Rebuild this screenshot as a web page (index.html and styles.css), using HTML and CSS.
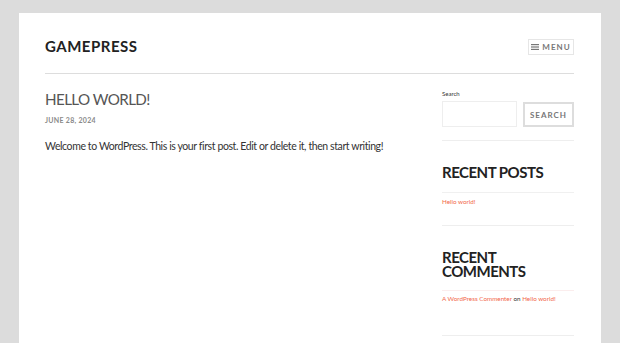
FILE: index.html
```html
<!DOCTYPE html>
<html lang="en">
<head>
    <meta charset="UTF-8">
    <meta name="viewport" content="width=device-width, initial-scale=1.0">
    <title>GamePress</title>
    <link rel="stylesheet" href="styles.css">
</head>
<body>
    <div class="page">
        <header class="site-header">
            <div class="site-title">GAMEPRESS</div>
            <button class="menu-toggle">
                <svg class="menu-icon" width="8" height="6" viewBox="0 0 8 6">
                    <rect x="0" y="0" width="8" height="1.2" fill="#777"></rect>
                    <rect x="0" y="2.4" width="8" height="1.2" fill="#777"></rect>
                    <rect x="0" y="4.8" width="8" height="1.2" fill="#777"></rect>
                </svg>
                MENU
            </button>
        </header>
        <div class="content">
            <main class="main">
                <article class="post">
                    <h2 class="post-title">HELLO WORLD!</h2>
                    <div class="post-date">JUNE 28, 2024</div>
                    <p class="post-body">Welcome to WordPress. This is your first post. Edit or delete it, then start writing!</p>
                </article>
            </main>
            <aside class="sidebar">
                <div class="widget-search">
                    <label class="search-label" for="s">Search</label>
                    <div class="search-form">
                        <input type="text" id="s" class="search-field">
                        <button class="search-submit">SEARCH</button>
                    </div>
                </div>
                <div class="widget">
                    <h3 class="widget-title">RECENT POSTS</h3>
                    <ul class="widget-list">
                        <li><a href="#">Hello world!</a></li>
                    </ul>
                </div>
                <div class="widget widget-comments">
                    <h3 class="widget-title">RECENT COMMENTS</h3>
                    <ul class="widget-list">
                        <li><a href="#">A WordPress Commenter</a> on <a href="#">Hello world!</a></li>
                    </ul>
                </div>
                <div class="widget"></div>
            </aside>
        </div>
    </div>
</body>
</html>
```

FILE: styles.css
```css
body {
    margin: 0;
    padding: 13px 19px 0;
    background-color: #DCDCDC;
    font-family: 'Lato', 'Liberation Sans', sans-serif;
    color: #333333;
}
.page {
    background-color: #FFFFFF;
    padding: 0 27px 0 26px;
    height: 330px;
    overflow: hidden;
}
.site-header {
    display: flex;
    justify-content: space-between;
    align-items: flex-start;
    padding: 25px 0 18px;
    border-bottom: 1px solid #DDDDDD;
}
.site-title {
    font-size: 15px;
    line-height: 16px;
    font-weight: 700;
    letter-spacing: 0.5px;
    color: #222222;
}
.menu-toggle {
    margin-top: 1px;
    width: 46px;
    height: 16px;
    padding: 0;
    background: #FFFFFF;
    border: 1px solid #E6E6E6;
    display: flex;
    align-items: center;
    justify-content: center;
    gap: 3px;
    font-family: inherit;
    font-size: 8px;
    font-weight: 700;
    letter-spacing: 1px;
    color: #777777;
}
.content {
    display: flex;
    justify-content: space-between;
}
.main {
    width: 370px;
    padding-top: 15px;
}
.post-title {
    margin: 0;
    font-size: 15.2px;
    line-height: 20px;
    font-weight: 400;
    letter-spacing: -0.6px;
    color: #555555;
}
.post-date {
    margin-top: 6px;
    font-size: 7px;
    line-height: 10px;
    font-weight: 700;
    letter-spacing: 0.3px;
    color: #8A8A8A;
}
.post-body {
    margin: 13px 0 0;
    font-size: 10.5px;
    line-height: 16px;
    letter-spacing: -0.4px;
    color: #333333;
}
.sidebar {
    width: 132px;
    padding-top: 16px;
}
.search-label {
    display: block;
    font-size: 6px;
    line-height: 8px;
    color: #333333;
}
.search-form {
    display: flex;
    justify-content: space-between;
    margin-top: 3px;
}
.search-field {
    box-sizing: border-box;
    width: 75px;
    height: 26px;
    margin: 0;
    border: 1px solid #EEEEEE;
    outline: none;
}
.search-submit {
    box-sizing: border-box;
    width: 51px;
    height: 25px;
    margin-top: 1px;
    padding: 0;
    background: #FFFFFF;
    border: 2px solid #DDDDDD;
    font-family: inherit;
    font-size: 8px;
    font-weight: 700;
    letter-spacing: 1px;
    color: #777777;
}
.widget-search {
    padding-bottom: 13px;
}
.widget {
    border-top: 1px solid #EEEEEE;
}
.widget-title {
    margin: 24px 0 0;
    padding-bottom: 13px;
    border-bottom: 1px solid #F0F0F0;
    font-size: 15px;
    line-height: 14px;
    font-weight: 700;
    letter-spacing: -0.5px;
    color: #222222;
}
.widget-list {
    list-style: none;
    margin: 4px 0 0;
    padding: 0 0 18px;
    font-size: 6.3px;
    line-height: 10px;
    color: #333333;
}
.widget-list a {
    color: #F2674A;
    text-decoration: none;
}
.widget-comments .widget-title {
    padding-bottom: 12px;
    border-bottom-color: #FBEDED;
}
.widget-comments .widget-list {
    margin-top: 3px;
    padding-bottom: 31px;
}
```
